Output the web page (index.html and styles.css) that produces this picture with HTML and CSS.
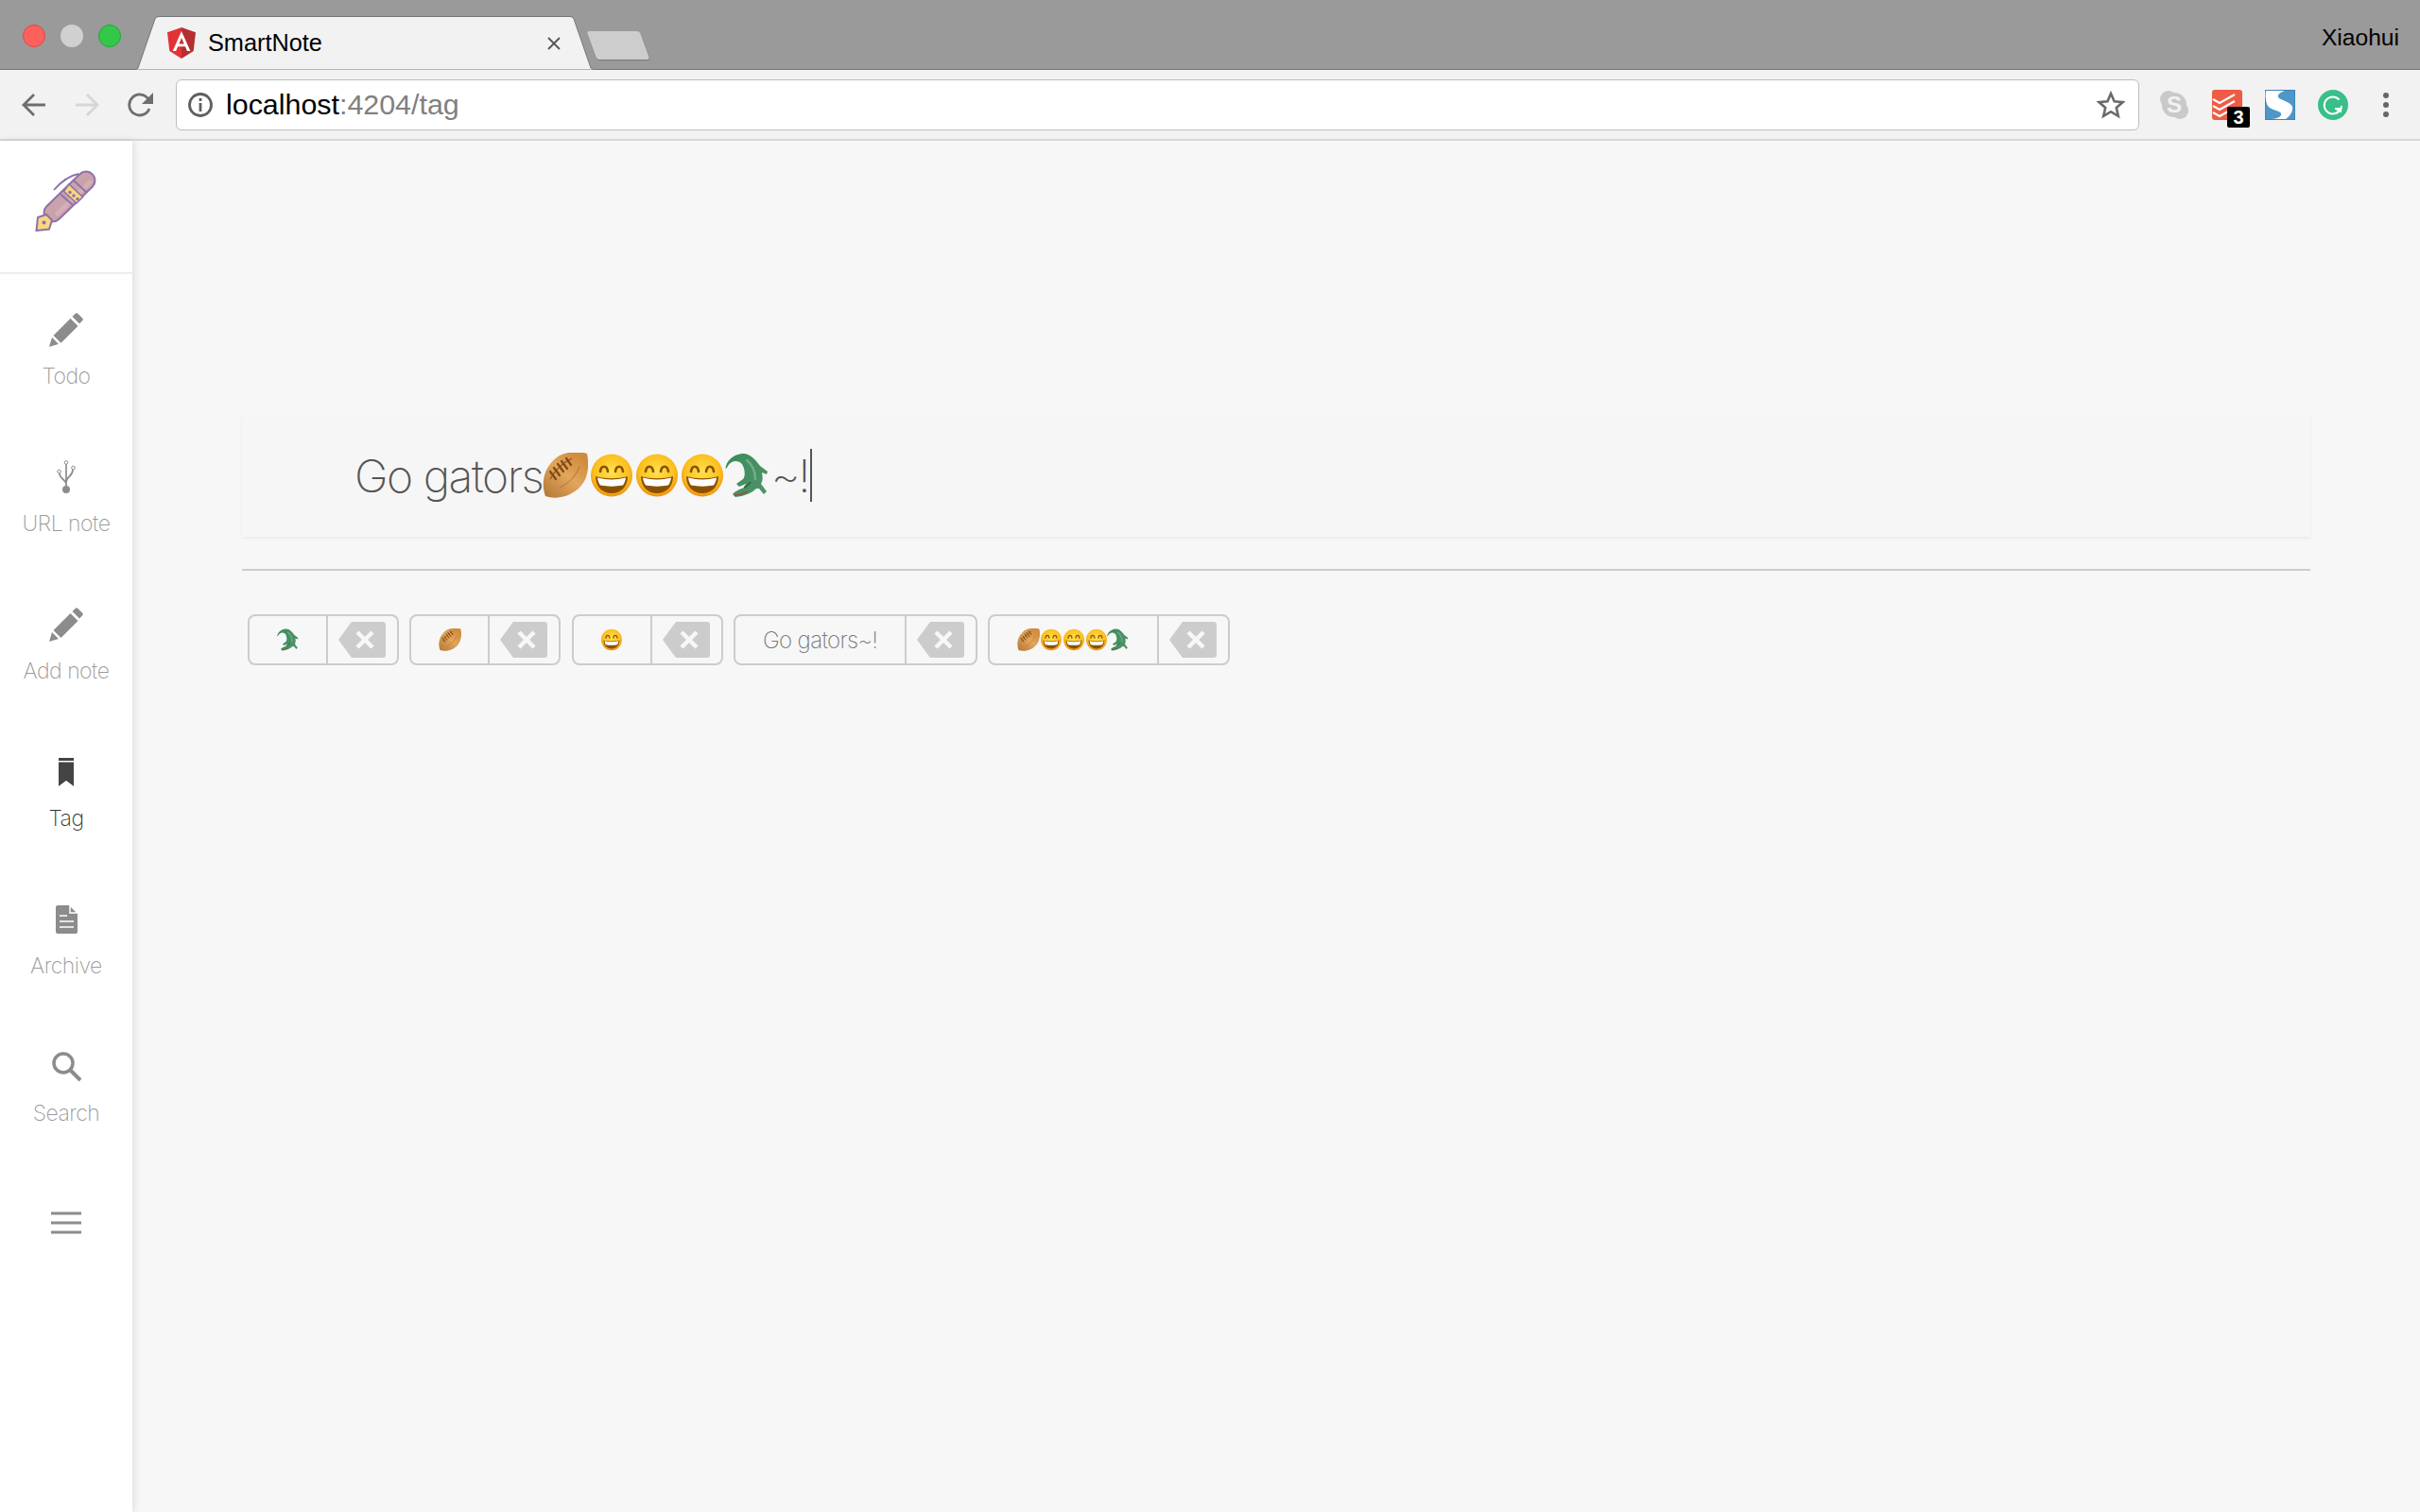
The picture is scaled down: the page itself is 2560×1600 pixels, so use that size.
FILE: index.html
```html
<!DOCTYPE html>
<html lang="en">
<head>
    <meta charset="UTF-8">
    <title>SmartNote</title>
    <link rel="stylesheet" href="styles.css">
</head>
<body>
    <svg class="sprites" width="0" height="0">
        <defs>
            <radialGradient id="smile-fill" cx="50%" cy="42%" r="60%">
                <stop offset="0" stop-color="#ffe14d"/>
                <stop offset="0.7" stop-color="#fbbf1e"/>
                <stop offset="1" stop-color="#ee8a12"/>
            </radialGradient>
            <linearGradient id="ball-fill" x1="0.1" y1="0.95" x2="0.8" y2="0.1">
                <stop offset="0" stop-color="#b97c3a"/>
                <stop offset="0.55" stop-color="#e2a65c"/>
                <stop offset="1" stop-color="#d08c3e"/>
            </linearGradient>
            <linearGradient id="gator-fill" x1="0" y1="0" x2="1" y2="1">
                <stop offset="0" stop-color="#3c8c5c"/>
                <stop offset="1" stop-color="#4f9468"/>
            </linearGradient>
            <symbol id="smile" viewBox="0 0 48 48">
                <ellipse cx="24" cy="24" rx="22" ry="22.5" fill="url(#smile-fill)"/>
                <path d="M12 20c1-7 7-7 8 0M28 20c1-7 7-7 8 0" fill="none" stroke="#8a5200" stroke-width="2.6" stroke-linecap="round"/>
                <path d="M7 25c10 3 24 3 34 0 0 11-7 18-17 18S7 36 7 25z" fill="#8a5200"/>
                <path d="M9 26.500c10 2.500 20 2.500 30 0-.5 3.500-1.500 6-3 8-8 1.500-16 1.500-24 0-1.500-2-2.500-4.500-3-8z" fill="#fff"/>
            </symbol>
            <symbol id="ball" viewBox="0 0 48 48">
                <path d="M3 46C-3 30 3 12 18 3 28-2 42-1 47 1c2 8 2 22-4 31C35 44 18 51 3 46z" fill="url(#ball-fill)"/>
                <path d="M8 28C13 19 21 11 31 6" fill="none" stroke="#8a5218" stroke-width="1.200"/>
                <path d="M8 20l6 8M12 16l6 8M16 12l6 8M20 9l6 8M25 6l5 7" stroke="#7f4a16" stroke-width="2.200" stroke-linecap="round"/>
                <path d="M18 37C27 33 35 25 39 15" fill="none" stroke="#b07434" stroke-width="1"/>
            </symbol>
            <symbol id="gator" viewBox="0 0 48 48">
                <path d="M.5 17C1 9 8 2 18 1c8-1 15 7 19 13l8 6-1 3-5-2c1 5 1 9-1 12l6 8-3 3-5-6h-3c-5 5-13 8-22 9l-3-3c2-3 7-5 12-7l2-4-7 3-3-3 7-5c3-3 2-13-2-17C12 7 5 9 2 16z" fill="url(#gator-fill)"/>
                <path d="M23 8c6 5 9 13 9 20" fill="none" stroke="#72ad88" stroke-width="2.500" stroke-linecap="round"/>
                <path d="M27 31c-2 3-4 5-7 6" fill="none" stroke="#2d6e46" stroke-width="2"/>
                <path d="M10 45c5 0 10-2 14-4" fill="none" stroke="#b23a2e" stroke-width="1.300"/>
            </symbol>
            <symbol id="pencil" viewBox="0 0 36 36">
                <path d="M0 36l3-10 7 7zM4.500 24L22.500 6l8 8-18 18zM24.500 4l3-3c1-1 2-1 3 0l4.500 4.500c1 1 1 2 0 3l-3 3z" fill="#8c8c8c"/>
            </symbol>
            <symbol id="remove" viewBox="0 0 50 38">
                <path d="M0 19L14 0h33c2 0 3 1 3 3v32c0 2-1 3-3 3H14z" fill="#cccccc"/>
                <path d="M20 11l16 16M36 11L20 27" stroke="#f7f7f7" stroke-width="4.500"/>
            </symbol>
        </defs>
    </svg>

    <header class="tabstrip">
        <div class="lights">
            <span class="light light-red"></span>
            <span class="light light-grey"></span>
            <span class="light light-green"></span>
        </div>
        <div class="tab">
            <svg class="tab-shape" width="484" height="57" viewBox="0 0 484 57"><path d="M0 56.500L2 55 20 3Q21 .5 24 .5H459Q462 .5 463 3L481 55 484 56.500" fill="#f2f2f2" stroke="#777"/></svg>
            <svg class="tab-icon" width="30" height="33" viewBox="0 0 30 33">
                <path d="M15 0L0 5.300l2.300 19.800L15 33z" fill="#e23237"/>
                <path d="M15 0l15 5.300-2.300 19.800L15 33z" fill="#b52e31"/>
                <path d="M15 4L5.700 25h3.500l1.900-4.700h7.900l1.900 4.700h3.500zm2.700 13.400h-5.400L15 11z" fill="#fff"/>
            </svg>
            <span class="tab-title">SmartNote</span>
            <svg class="tab-close" width="14" height="14" viewBox="0 0 14 14"><path d="M1 1l12 12M13 1L1 13" stroke="#555" stroke-width="1.800"/></svg>
        </div>
        <div class="newtab"></div>
        <span class="profile">Xiaohui</span>
    </header>

    <div class="toolbar">
        <svg class="nav-btn" width="26" height="26" viewBox="0 0 26 26"><path d="M25 13H3M13 2L2 13l11 11" fill="none" stroke="#6e6e6e" stroke-width="2.800"/></svg>
        <svg class="nav-btn" width="26" height="26" viewBox="0 0 26 26"><path d="M1 13h22M13 2l11 11-11 11" fill="none" stroke="#d6d6d6" stroke-width="2.800"/></svg>
        <svg class="nav-btn" width="28" height="28" viewBox="0 0 28 28"><path d="M23 18a11 11 0 1 1-1-10" fill="none" stroke="#6e6e6e" stroke-width="2.800"/><path d="M27 1v12H15z" fill="#6e6e6e"/></svg>
        <div class="omnibox">
            <svg width="28" height="28" viewBox="0 0 28 28"><circle cx="14" cy="14" r="11.500" fill="none" stroke="#5f5f5f" stroke-width="2.800"/><path d="M14 12v9M14 7v3" stroke="#5f5f5f" stroke-width="2.800"/></svg>
            <span class="url"><span class="url-host">localhost</span>:4204/tag</span>
            <svg class="star" width="30" height="30" viewBox="0 0 30 30"><path d="M15 3l3.600 8.300 9 .8-6.800 5.900 2 8.800-7.800-4.600-7.800 4.600 2-8.800-6.800-5.900 9-.8z" fill="none" stroke="#6a6a6a" stroke-width="2.600"/></svg>
        </div>
        <div class="extensions">
            <svg class="ext" width="32" height="32" viewBox="0 0 32 32">
                <circle cx="10" cy="10" r="9" fill="#c9c9c9"/><circle cx="22" cy="22" r="9" fill="#c9c9c9"/><circle cx="16" cy="16" r="13" fill="#c9c9c9"/>
                <text x="16" y="24" class="ext-s">S</text>
            </svg>
            <div class="ext ext-todoist">
                <svg width="32" height="32" viewBox="0 0 32 32">
                    <rect width="32" height="32" rx="3" fill="#ee5b46"/>
                    <path d="M1 10l7 4L24 5M1 17l7 4 16-9M1 24l7 4 16-9" fill="none" stroke="#fff" stroke-width="2.200"/>
                </svg>
                <span class="badge">3</span>
            </div>
            <svg class="ext" width="32" height="32" viewBox="0 0 32 32">
                <rect x=".5" y=".5" width="31" height="31" fill="#4e97c8" stroke="#3f86b6"/>
                <path d="M1 1h20c-6 2-9 5-6 8 3 2 12 4 14 9 1 5-3 10-7 13H4c8 0 14-2 13-6-1-3-10-3-14-8C1 14 0 6 1 1z" fill="#fff"/>
            </svg>
            <svg class="ext" width="32" height="32" viewBox="0 0 32 32">
                <circle cx="16" cy="16" r="16" fill="#38bf8a"/>
                <path d="M22.500 10.500A9 9 0 1 0 24 20h-6" fill="none" stroke="#fff" stroke-width="2"/>
                <path d="M25 17l-1 6-5-3" fill="none" stroke="#fff" stroke-width="2"/>
            </svg>
            <svg class="ext-menu" width="6" height="26" viewBox="0 0 6 26"><circle cx="3" cy="3" r="3" fill="#666"/><circle cx="3" cy="13" r="3" fill="#666"/><circle cx="3" cy="23" r="3" fill="#666"/></svg>
        </div>
    </div>

    <div class="app">
        <nav class="sidebar">
            <div class="logo">
                <svg width="66" height="66" viewBox="0 0 66 66">
                    <path d="M20 22C27 14 36 7 46 5" fill="none" stroke="#8f70ab" stroke-width="1.800"/>
                    <path d="M19 46L54 12" stroke="#8f70ab" stroke-width="21" stroke-linecap="round"/>
                    <path d="M19 46L54 12" stroke="#c9a2ab" stroke-width="17" stroke-linecap="round"/>
                    <path d="M24 47L58 14" stroke="#dcb9bd" stroke-width="5" stroke-linecap="round" opacity=".6"/>
                    <path d="M30.500 23.500L36 16l14.500 13.500-6.500 6.500z" fill="#f8d77e" stroke="#8f70ab" stroke-width="1.600"/>
                    <path d="M40.500 11.500L55 25M27 26.500L40 38" stroke="#8f70ab" stroke-width="1.800"/>
                    <circle cx="37" cy="24.500" r="1.700" fill="#8f70ab"/><circle cx="41" cy="28" r="1.700" fill="#8f70ab"/><circle cx="45" cy="31.500" r="1.700" fill="#8f70ab"/>
                    <path d="M1.500 65L3 51l9-3 6 6-3 9.500z" fill="#f8d77e" stroke="#8f70ab" stroke-width="2"/>
                    <circle cx="9.500" cy="56.500" r="2" fill="#8f70ab"/>
                </svg>
            </div>
            <a class="nav-item"><svg class="nav-icon"><use href="#pencil"/></svg><span class="nav-label">Todo</span></a>
            <a class="nav-item">
                <svg class="nav-icon" viewBox="0 0 36 36">
                    <path d="M18 3v28M11 14c0 6 7 6 7 12M25 10c0 8-7 6-7 14" fill="none" stroke="#8c8c8c" stroke-width="1.700"/>
                    <circle cx="18" cy="2.500" r="1.800" fill="#fff" stroke="#8c8c8c"/><circle cx="10.500" cy="12" r="1.800" fill="#fff" stroke="#8c8c8c"/><circle cx="25.500" cy="8" r="1.800" fill="#fff" stroke="#8c8c8c"/>
                    <circle cx="18" cy="31" r="4" fill="#8c8c8c"/>
                </svg>
                <span class="nav-label">URL note</span>
            </a>
            <a class="nav-item"><svg class="nav-icon"><use href="#pencil"/></svg><span class="nav-label">Add note</span></a>
            <a class="nav-item nav-active">
                <svg class="nav-icon" viewBox="0 0 36 36"><path d="M10 3h16v3H10zM10 7.500h16V33l-8-6-8 6z" fill="#444"/></svg>
                <span class="nav-label">Tag</span>
            </a>
            <a class="nav-item">
                <svg class="nav-icon" viewBox="0 0 36 36">
                    <path d="M9 3h13l8 8v20c0 1-1 2-2 2H9c-1 0-2-1-2-2V5c0-1 1-2 2-2z" fill="#8c8c8c"/>
                    <path d="M22 3v8h8zM11 14h8M11 20h15M11 26h15" fill="none" stroke="#fff" stroke-width="1.500"/>
                </svg>
                <span class="nav-label">Archive</span>
            </a>
            <a class="nav-item">
                <svg class="nav-icon" viewBox="0 0 36 36"><circle cx="15" cy="14" r="10" fill="none" stroke="#8c8c8c" stroke-width="3.500"/><path d="M22 21l11 11" stroke="#8c8c8c" stroke-width="4"/></svg>
                <span class="nav-label">Search</span>
            </a>
            <a class="nav-toggle">
                <svg class="nav-icon" viewBox="0 0 36 36"><path d="M2 8h32M2 18h32M2 28h32" stroke="#8c8c8c" stroke-width="3"/></svg>
            </a>
        </nav>

        <main class="content">
            <div class="tag-input">
                <span class="tag-text">Go gators</span><svg class="emoji-lg"><use href="#ball"/></svg><svg class="emoji-lg"><use href="#smile"/></svg><svg class="emoji-lg"><use href="#smile"/></svg><svg class="emoji-lg"><use href="#smile"/></svg><svg class="emoji-lg"><use href="#gator"/></svg><span class="tag-tail">~!</span><span class="caret"></span>
            </div>
            <hr class="rule">
            <div class="tags">
                <div class="tag">
                    <span class="tag-label"><svg class="emoji"><use href="#gator"/></svg></span>
                    <span class="tag-remove"><svg class="remove-icon"><use href="#remove"/></svg></span>
                </div>
                <div class="tag">
                    <span class="tag-label"><svg class="emoji"><use href="#ball"/></svg></span>
                    <span class="tag-remove"><svg class="remove-icon"><use href="#remove"/></svg></span>
                </div>
                <div class="tag">
                    <span class="tag-label"><svg class="emoji"><use href="#smile"/></svg></span>
                    <span class="tag-remove"><svg class="remove-icon"><use href="#remove"/></svg></span>
                </div>
                <div class="tag">
                    <span class="tag-label">Go gators~!</span>
                    <span class="tag-remove"><svg class="remove-icon"><use href="#remove"/></svg></span>
                </div>
                <div class="tag">
                    <span class="tag-label"><svg class="emoji"><use href="#ball"/></svg><svg class="emoji"><use href="#smile"/></svg><svg class="emoji"><use href="#smile"/></svg><svg class="emoji"><use href="#smile"/></svg><svg class="emoji"><use href="#gator"/></svg></span>
                    <span class="tag-remove"><svg class="remove-icon"><use href="#remove"/></svg></span>
                </div>
            </div>
        </main>
    </div>
</body>
</html>
```

FILE: styles.css
```css
body {
    margin: 0;
    height: 1600px;
    overflow: hidden;
    display: flex;
    flex-direction: column;
    font-family: "Liberation Sans", Arial, sans-serif;
    background-color: #f7f7f7;
}

.sprites {
    position: absolute;
}

/* browser chrome */
.tabstrip {
    flex: none;
    height: 73px;
    display: flex;
    align-items: flex-end;
    background-color: #9a9a9a;
    border-bottom: 1px solid #777;
}

.lights {
    display: flex;
    gap: 16px;
    align-self: flex-start;
    padding: 26px 0 0 24px;
}

.light {
    width: 24px;
    height: 24px;
    border-radius: 50%;
    box-sizing: border-box;
}

.light-red {
    background-color: #fc615d;
    border: 1px solid #df4744;
}

.light-grey {
    background-color: #d0d0d0;
}

.light-green {
    background-color: #34c84a;
    border: 1px solid #1fa833;
}

.tab {
    position: relative;
    width: 484px;
    height: 57px;
    margin: 0 0 -1px 16px;
    display: flex;
    align-items: center;
    box-sizing: border-box;
    padding: 0 35px 0 33px;
}

.tab-shape {
    position: absolute;
    left: 0;
    top: 0;
}

.tab-icon,
.tab-title,
.tab-close {
    position: relative;
}

.tab-title {
    margin-left: 13px;
    flex: 1;
    font-size: 25.3px;
    color: #000;
}

.newtab {
    width: 56px;
    height: 30px;
    margin: 0 0 10px -2px;
    background-color: #cdcdcd;
    border-radius: 3px;
    box-shadow: 0 1px 1px #777;
    transform: skewX(20deg);
}

.profile {
    margin-left: auto;
    align-self: center;
    padding: 6px 22px 0 0;
    font-size: 24.6px;
    color: #000;
}

.toolbar {
    flex: none;
    height: 75px;
    display: flex;
    align-items: center;
    box-sizing: border-box;
    padding: 0 33px 0 23px;
    gap: 30px;
    background-color: #f2f2f2;
    border-bottom: 2px solid #d8d8d8;
}

.omnibox {
    flex: 1;
    height: 54px;
    margin-left: -7px;
    display: flex;
    align-items: center;
    gap: 13px;
    box-sizing: border-box;
    padding: 0 14px 0 11px;
    background-color: #fff;
    border: 1px solid #bdbdbd;
    border-radius: 6px;
}

.url {
    flex: 1;
    font-size: 30.4px;
    color: #808080;
}

.url-host {
    color: #000;
}

.extensions {
    display: flex;
    align-items: center;
    gap: 24px;
    margin-left: -9px;
}

.ext-todoist {
    position: relative;
    height: 32px;
    width: 32px;
}

.ext-s {
    font-size: 24px;
    font-weight: bold;
    fill: #f2f2f2;
    text-anchor: middle;
}

.badge {
    position: absolute;
    left: 16px;
    top: 18px;
    width: 24px;
    height: 22px;
    border-radius: 2px;
    background-color: #000;
    color: #fff;
    font-size: 20px;
    font-weight: bold;
    line-height: 22px;
    text-align: center;
}

.ext-menu {
    margin-left: 13px;
}

/* app */
.app {
    flex: 1;
    display: flex;
    min-height: 0;
}

.sidebar {
    flex: none;
    width: 140px;
    background-color: #fff;
    box-shadow: 2px 0 8px rgba(0, 0, 0, 0.1);
    font-family: Inter, "Liberation Sans", sans-serif;
    font-weight: 200;
}

.logo {
    height: 141px;
    box-sizing: border-box;
    padding-top: 30px;
    border-bottom: 2px solid #eee;
    display: flex;
    justify-content: center;
}

.nav-item {
    height: 156px;
    box-sizing: border-box;
    padding-top: 41px;
    display: flex;
    flex-direction: column;
    align-items: center;
}

.nav-icon {
    width: 36px;
    height: 36px;
}

.nav-label {
    margin-top: 15px;
    font-size: 23px;
    letter-spacing: -0.5px;
    line-height: 32px;
    color: #999;
}

.nav-active .nav-label {
    color: #333;
}

.nav-toggle {
    display: flex;
    justify-content: center;
    padding-top: 50px;
}

.content {
    flex: 1;
    padding: 289px 116px 0;
    font-family: Inter, "Liberation Sans", sans-serif;
    font-weight: 200;
}

.tag-input {
    height: 130px;
    display: flex;
    align-items: center;
    padding-left: 119px;
    font-size: 48px;
    color: #555;
    background-color: #f6f6f6;
    box-shadow: 0 2px 3px rgba(0, 0, 0, 0.05);
}

.tag-text {
    letter-spacing: -1.5px;
}

.tag-tail {
    letter-spacing: -2.5px;
}

.emoji-lg {
    width: 48px;
    height: 48px;
    margin-right: 0.3px;
}

.caret {
    width: 2px;
    height: 56px;
    margin-left: 2px;
    background-color: #555;
}

.rule {
    margin: 34px 0 0;
    height: 2px;
    border: none;
    background-color: #ccc;
}

.tags {
    display: flex;
    gap: 11.6px;
    margin-top: 46px;
    padding-left: 6px;
}

.tag {
    display: flex;
    height: 54px;
    box-sizing: border-box;
    border: 2px solid #ccc;
    border-radius: 8px;
}

.tag-label {
    display: flex;
    align-items: center;
    justify-content: center;
    padding: 0 28.5px;
    font-size: 24px;
    letter-spacing: -0.65px;
    color: #777;
    border-right: 2px solid #ccc;
}

.emoji {
    width: 23.9px;
    height: 24px;
}

.tag-remove {
    width: 73px;
    display: flex;
    align-items: center;
    justify-content: center;
    padding-right: 1px;
    box-sizing: border-box;
}

.remove-icon {
    width: 50px;
    height: 38px;
}
```
